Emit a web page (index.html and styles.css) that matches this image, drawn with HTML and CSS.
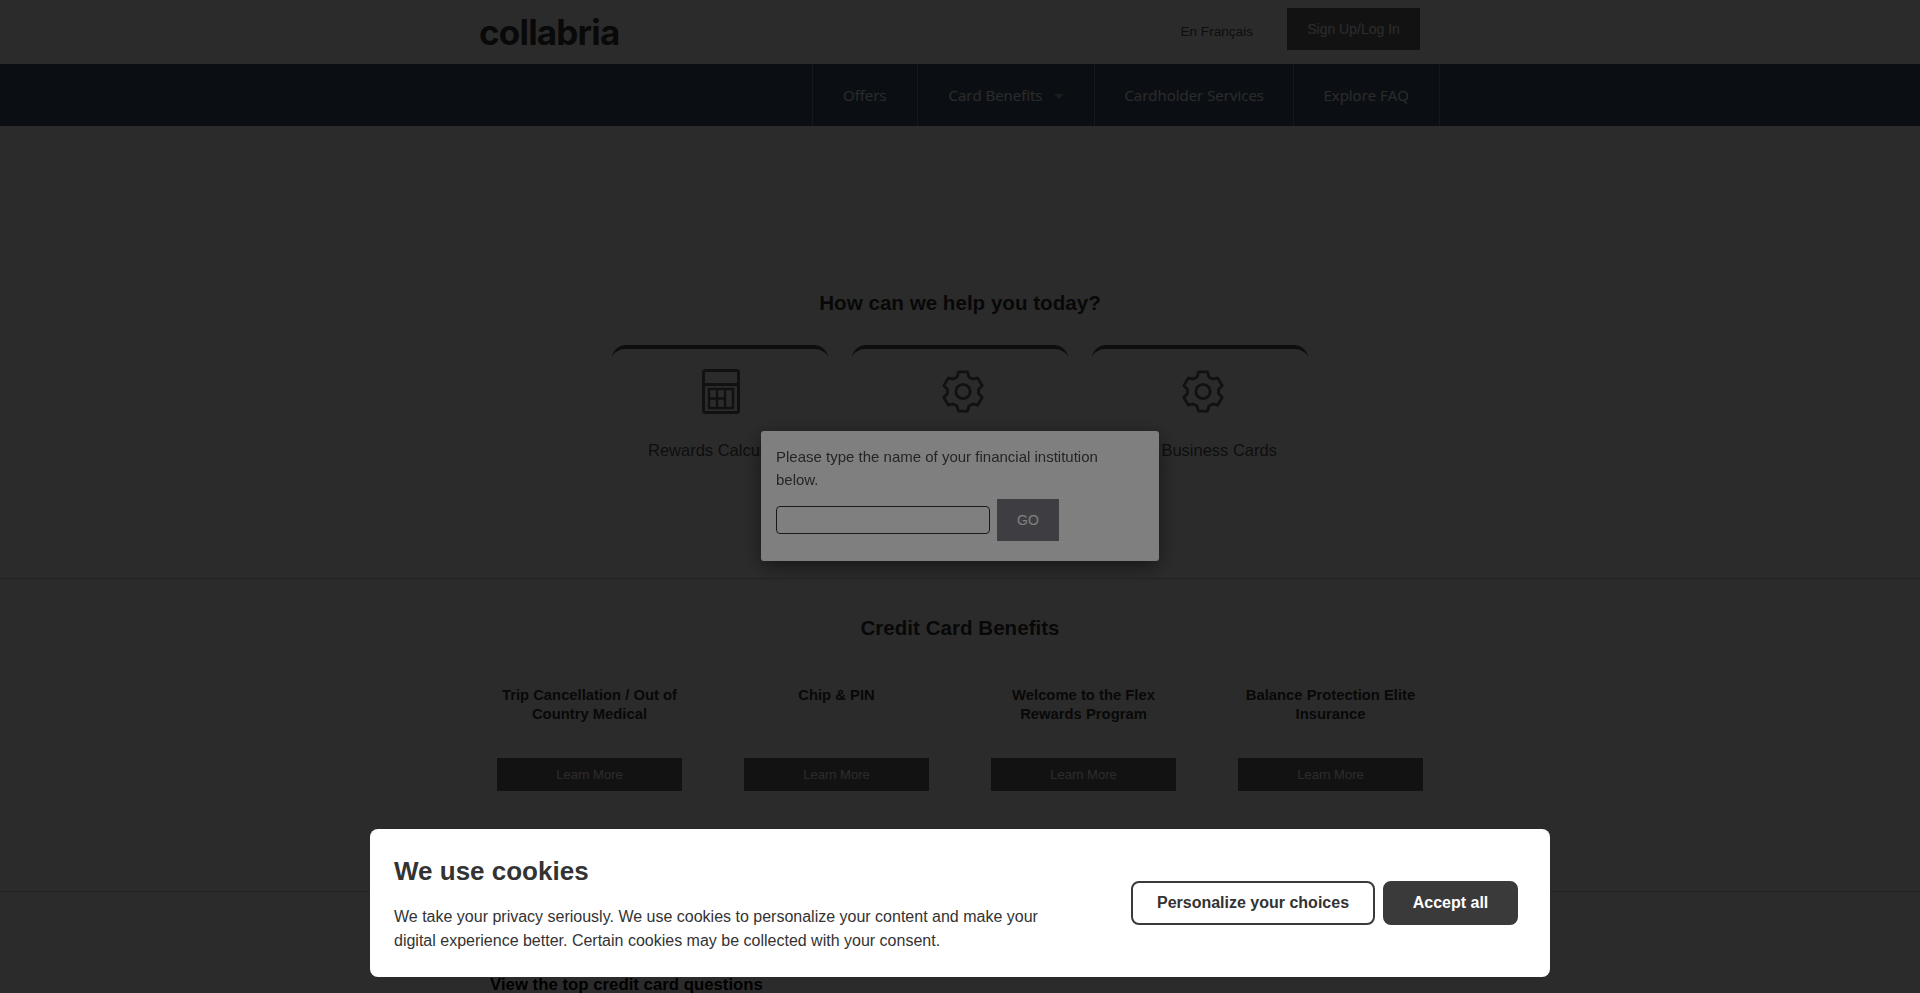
FILE: index.html
```html
<!DOCTYPE html>
<html lang="en">
<head>
    <meta charset="UTF-8">
    <meta name="viewport" content="width=device-width, initial-scale=1.0">
    <title>Collabria</title>
    <link rel="stylesheet" href="styles.css">
</head>
<body>
    <header class="top-bar">
        <div class="container top-bar-content">
            <a href="#" class="logo">collabria</a>
            <div class="top-links">
                <a href="#" class="lang-link">En Français</a>
                <a href="#" class="btn-login">Sign Up/Log In</a>
            </div>
        </div>
    </header>

    <nav class="main-nav">
        <ul class="nav-list">
            <li class="nav-item nav-offers"><a href="#">Offers</a></li>
            <li class="nav-item"><a href="#">Card Benefits <span class="nav-caret"></span></a></li>
            <li class="nav-item nav-services"><a href="#">Cardholder Services</a></li>
            <li class="nav-item nav-faq"><a href="#">Explore FAQ</a></li>
        </ul>
    </nav>

    <main>
        <section class="help-section">
            <h2 class="section-title">How can we help you today?</h2>
            <div class="help-grid">
                <a href="#" class="help-card">
                    <svg class="help-icon icon-calc" viewBox="0 0 38 45" fill="none" stroke="currentColor" stroke-width="3">
                        <rect x="1.500" y="1.500" width="35" height="42" rx="2"/>
                        <path d="M1.500 15.500h35"/>
                        <rect x="7" y="20" width="24" height="19" stroke-width="2.500"/>
                        <path d="M7 29.500h16M15 20v19M23 20v19" stroke-width="2.500"/>
                    </svg>
                    <span class="help-label">Rewards Calculator</span>
                </a>
                <a href="#" class="help-card">
                    <svg class="help-icon icon-gear" viewBox="-2 0 44 46" fill="none" stroke="currentColor" stroke-width="3" stroke-linejoin="round">
                        <circle cx="20" cy="23" r="7.500"/>
                        <path d="M15.300 2.500h9.400l1.500 5.200 4 2.300 5.200-1.300 4.700 8.200-3.800 3.800v4.600l3.800 3.800-4.700 8.200-5.200-1.300-4 2.300-1.500 5.200h-9.400l-1.500-5.200-4-2.300-5.200 1.300-4.700-8.200 3.800-3.800v-4.600l-3.800-3.800 4.700-8.200 5.200 1.300 4-2.300z"/>
                    </svg>
                    <span class="help-label">Personal Cards</span>
                </a>
                <a href="#" class="help-card">
                    <svg class="help-icon icon-gear" viewBox="-2 0 44 46" fill="none" stroke="currentColor" stroke-width="3" stroke-linejoin="round">
                        <circle cx="20" cy="23" r="7.500"/>
                        <path d="M15.300 2.500h9.400l1.500 5.200 4 2.300 5.200-1.300 4.700 8.200-3.800 3.800v4.600l3.800 3.800-4.700 8.200-5.200-1.300-4 2.300-1.500 5.200h-9.400l-1.500-5.200-4-2.300-5.200 1.300-4.700-8.200 3.800-3.800v-4.600l-3.800-3.800 4.700-8.200 5.200 1.300 4-2.300z"/>
                    </svg>
                    <span class="help-label help-label-business">Visa Business Cards</span>
                </a>
            </div>
        </section>

        <section class="benefits-section">
            <h2 class="section-title">Credit Card Benefits</h2>
            <div class="benefits-grid">
                <div class="benefit-card">
                    <h3 class="benefit-title">Trip Cancellation / Out of Country Medical</h3>
                    <a href="#" class="btn-learn">Learn More</a>
                </div>
                <div class="benefit-card">
                    <h3 class="benefit-title">Chip &amp; PIN</h3>
                    <a href="#" class="btn-learn">Learn More</a>
                </div>
                <div class="benefit-card">
                    <h3 class="benefit-title">Welcome to the Flex Rewards Program</h3>
                    <a href="#" class="btn-learn">Learn More</a>
                </div>
                <div class="benefit-card">
                    <h3 class="benefit-title">Balance Protection Elite Insurance</h3>
                    <a href="#" class="btn-learn">Learn More</a>
                </div>
            </div>
        </section>

        <section class="faq-section">
            <h2 class="faq-title">View the top credit card questions</h2>
        </section>
    </main>

    <!-- Financial institution prompt -->
    <div class="modal-overlay">
        <div class="modal">
            <p class="modal-text">Please type the name of your financial institution below.</p>
            <form class="modal-form">
                <input type="text" class="modal-input">
                <button type="button" class="btn-go">GO</button>
            </form>
        </div>
    </div>

    <!-- Cookie banner -->
    <div class="cookie-overlay">
        <div class="cookie-banner">
            <div class="cookie-copy">
                <h2 class="cookie-title">We use cookies</h2>
                <p class="cookie-text">We take your privacy seriously. We use cookies to personalize your content and make your digital experience better. Certain cookies may be collected with your consent.</p>
            </div>
            <div class="cookie-actions">
                <button class="btn-cookie btn-outline">Personalize your choices</button>
                <button class="btn-cookie btn-solid">Accept all</button>
            </div>
        </div>
    </div>
</body>
</html>
```

FILE: styles.css
```css
:root {
    --navy: #42597a;
    --dark-button: #6f6a6a;
    --border: #cfcfcf;
    --heading: #333333;
}
* {
    margin: 0;
    padding: 0;
    box-sizing: border-box;
}
html, body {
    height: 100%;
    overflow: hidden;
}
body {
    font-family: "Liberation Sans", Arial, sans-serif;
    color: var(--heading);
    background-color: #fff;
}
a {
    color: inherit;
    text-decoration: none;
}
.container {
    width: 960px;
    margin: 0 auto;
}

/* Top bar */
.top-bar {
    height: 64px;
}
.top-bar-content {
    display: flex;
    justify-content: space-between;
    height: 100%;
}
.logo {
    font-family: Inter, sans-serif;
    font-size: 35px;
    font-weight: 700;
    letter-spacing: -0.800px;
    line-height: 64px;
    margin-left: -1px;
    color: #3a3a3a;
}
.top-links {
    display: flex;
    align-items: flex-start;
    gap: 34px;
    padding-right: 20px;
}
.lang-link {
    font-size: 13.600px;
    color: #555;
    margin-top: 24px;
}
.btn-login {
    width: 133px;
    height: 42px;
    margin-top: 8px;
    line-height: 42px;
    text-align: center;
    font-size: 14px;
    color: #fff;
    background-color: var(--dark-button);
}

/* Main nav */
.main-nav {
    height: 62px;
    background-color: var(--navy);
}
.nav-list {
    display: flex;
    list-style: none;
    height: 100%;
    margin-left: 812px;
    border-left: 1px solid #7d8ea6;
    width: fit-content;
}
.nav-item {
    border-right: 1px solid #7d8ea6;
    font-family: "Open Sans", sans-serif;
    font-size: 15px;
    line-height: 62px;
    color: #fff;
    padding: 0 30px;
}
.nav-offers {
    padding-right: 31px;
}
.nav-services {
    padding: 0 29px;
}
.nav-faq {
    padding: 0 29.500px;
}
.nav-caret {
    display: inline-block;
    margin-left: 8px;
    vertical-align: 2px;
    border-left: 5px solid transparent;
    border-right: 5px solid transparent;
    border-top: 5px solid #9aa;
}

/* Help section */
.section-title {
    font-size: 20.600px;
    line-height: 26px;
    text-align: center;
}
.help-section {
    height: 453px;
    padding-top: 164px;
    border-bottom: 1px solid var(--border);
}
.help-grid {
    display: flex;
    justify-content: center;
    gap: 24px;
    margin-top: 29px;
}
.help-card {
    width: 216px;
    height: 120px;
    padding-top: 20px;
    display: flex;
    flex-direction: column;
    align-items: center;
    border-top: 4px solid #555;
    border-radius: 14px 14px 0 0;
    color: #555;
    box-shadow: 0 0 3px rgba(0, 0, 0, 0.08);
}
.help-icon {
    color: #666;
}
.icon-calc {
    width: 38px;
    height: 45px;
    margin-left: 2px;
}
.icon-gear {
    width: 42px;
    height: 45px;
    margin-left: 6px;
}
.help-label {
    margin-top: 27px;
    font-size: 16.500px;
}
.help-label-business {
    margin-left: 2px;
}

/* Benefits section */
.benefits-section {
    height: 313px;
    padding-top: 36px;
    border-bottom: 1px solid var(--border);
}
.benefits-grid {
    display: flex;
    justify-content: center;
    gap: 20px;
    margin-top: 26px;
}
.benefit-card {
    width: 227px;
    height: 131px;
    padding: 19px 21px 7px;
    display: flex;
    flex-direction: column;
    justify-content: space-between;
    box-shadow: 0 0 8px rgba(0, 0, 0, 0.05);
}
.benefit-title {
    font-size: 14.800px;
    line-height: 19px;
    text-align: center;
}
.btn-learn {
    height: 33px;
    line-height: 33px;
    text-align: center;
    font-size: 13px;
    color: #fff;
    background-color: var(--dark-button);
}

/* FAQ section */
.faq-section {
    padding: 83px 0 0 490px;
}
.faq-title {
    font-size: 16.800px;
    color: #000;
}

/* Institution modal */
.modal-overlay,
.cookie-overlay {
    position: fixed;
    top: 0;
    left: 0;
    right: 0;
    bottom: 0;
    display: flex;
    justify-content: center;
}
.modal-overlay {
    align-items: center;
    background-color: rgba(0, 0, 0, 0.66);
}
.modal {
    width: 398px;
    height: 130px;
    margin-bottom: 1px;
    padding: 14px 15px;
    background-color: #fff;
    border-radius: 3px;
    box-shadow: 0 5px 20px rgba(0, 0, 0, 0.5);
}
.modal-text {
    font-size: 15px;
    line-height: 23px;
    color: #4a4a4a;
}
.modal-form {
    display: flex;
    align-items: center;
    gap: 7px;
    margin-top: 8px;
}
.modal-input {
    width: 214px;
    height: 28px;
    border: 1px solid #333;
    border-radius: 4px;
    background-color: #fff;
}
.btn-go {
    width: 62px;
    height: 42px;
    border: none;
    font-family: inherit;
    font-size: 14px;
    color: #fff;
    background-color: #7c7c84;
}

/* Cookie banner */
.cookie-overlay {
    align-items: flex-end;
    padding-bottom: 16px;
    background-color: rgba(0, 0, 0, 0.5);
}
.cookie-banner {
    width: 1180px;
    height: 148px;
    padding: 26px 32px 0 24px;
    display: flex;
    justify-content: space-between;
    background-color: #fff;
    border-radius: 8px;
    color: #333;
}
.cookie-copy {
    width: 680px;
}
.cookie-title {
    font-size: 26px;
    line-height: 32px;
    margin-bottom: 18px;
}
.cookie-text {
    font-size: 16px;
    line-height: 24px;
}
.cookie-actions {
    display: flex;
    gap: 8px;
    margin-top: 26px;
}
.btn-cookie {
    height: 44px;
    border: 2px solid #3a3a3a;
    border-radius: 8px;
    font-family: inherit;
    font-size: 16px;
    font-weight: bold;
}
.btn-outline {
    width: 244px;
    color: #333;
    background-color: #fff;
}
.btn-solid {
    width: 135px;
    color: #fff;
    background-color: #3a3a3a;
}
```
